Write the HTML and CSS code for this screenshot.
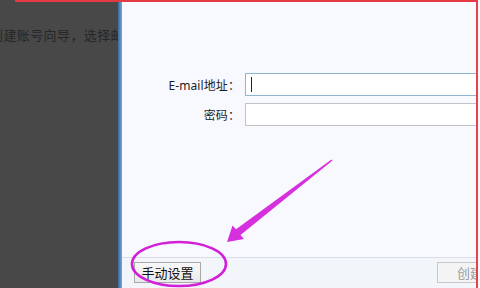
FILE: index.html
```html
<!DOCTYPE html>
<html>
<head>
<meta charset="utf-8">
<link rel="stylesheet" href="styles.css">
</head>
<body>
<div class="screen">
  <div class="backdrop">
    <div class="back-text">创建账号向导，选择邮箱类型</div>
  </div>
  <div class="frame-edge"></div>
  <div class="dialog">
    <div class="content">
      <div class="row">
        <label class="label">E-mail地址：</label>
        <div class="input focused"><span class="caret"></span></div>
      </div>
      <div class="row">
        <label class="label">密码：</label>
        <div class="input"></div>
      </div>
    </div>
    <div class="footer">
      <button class="btn">手动设置</button>
      <button class="btn disabled">创建</button>
    </div>
  </div>
  <div class="red-edge"></div>
  <div class="tail"></div>
  <div class="red-top"></div>
  <svg class="annot" width="480" height="288" viewBox="0 0 480 288">
    <ellipse cx="179" cy="264" rx="47" ry="22" fill="none" stroke="#d21fd8" stroke-width="2.6"/>
    <path d="M332.5 160.6 L240.5 235 L244 239 L227 242 L232.5 225.5 L236 229.3 L331.5 159.4 Z" fill="#d630de"/>
  </svg>
</div>
</body>
</html>
```
FILE: styles.css
```css
html, body {
  margin: 0;
  padding: 0;
}
body {
  width: 480px;
  height: 288px;
  overflow: hidden;
  font-family: "Noto Sans", "Noto Sans CJK SC", sans-serif;
}
.screen {
  position: relative;
  display: flex;
  width: 480px;
  height: 288px;
  overflow: hidden;
}
.backdrop {
  width: 118px;
  flex: none;
  background: #484848;
  overflow: hidden;
  position: relative;
}
.back-text {
  margin-top: 27px;
  margin-left: -10px;
  white-space: nowrap;
  font-family: "Noto Sans CJK SC", sans-serif;
  font-size: 13px;
  letter-spacing: 0.4px;
  line-height: 16px;
  color: #262626;
}
.frame-edge {
  width: 4px;
  flex: none;
  background: linear-gradient(to right, #3b6a9c, #5d8dbf 60%, #7fa6cf);
}
.dialog {
  width: 354px;
  flex: none;
  display: flex;
  flex-direction: column;
  background: #f7f9fe;
  overflow: hidden;
}
.content {
  height: 257px;
  padding-top: 73px;
  box-sizing: border-box;
  display: flex;
  flex-direction: column;
  gap: 7px;
}
.row {
  display: flex;
  align-items: center;
  height: 23px;
}
.label {
  width: 118px;
  flex: none;
  text-align: right;
  font-size: 12px;
  color: #1e1e1e;
  margin-right: 5px;
  white-space: nowrap;
  letter-spacing: 0.1px;
}
.input {
  flex: none;
  width: 250px;
  height: 23px;
  box-sizing: border-box;
  border: 1px solid #c4c4c4;
  background: #ffffff;
  position: relative;
}
.input.focused {
  border-color: #8fb6cc;
}
.caret {
  position: absolute;
  left: 5px;
  top: 3px;
  width: 1px;
  height: 15px;
  background: #222;
}
.footer {
  flex: 1;
  border-top: 1px solid #d9dee6;
  background: #f2f5fa;
  display: flex;
  justify-content: space-between;
  padding: 4px 0 0 12px;
  box-sizing: border-box;
}
.btn {
  height: 21px;
  width: 67px;
  padding: 0;
  border: 1px solid #a9a9a9;
  background: linear-gradient(#f8f8f8, #e9e9e9);
  font-family: "Noto Sans CJK SC", sans-serif;
  font-size: 13px;
  color: #111;
  flex: none;
}
.btn.disabled {
  width: 60px;
  margin-right: -21px;
  border-color: #c8c8c8;
  background: #f4f4f4;
  color: #9a9a9a;
  text-align: left;
  padding-left: 19px;
}
.red-edge {
  width: 2px;
  flex: none;
  background: #e0454f;
}
.tail {
  flex: 1;
  background: #f7f9fe;
}
.red-top {
  position: absolute;
  left: 15px;
  top: 0;
  width: 463px;
  height: 2px;
  background: #e33a44;
}
.annot {
  position: absolute;
  left: 0;
  top: 0;
  pointer-events: none;
}
```
